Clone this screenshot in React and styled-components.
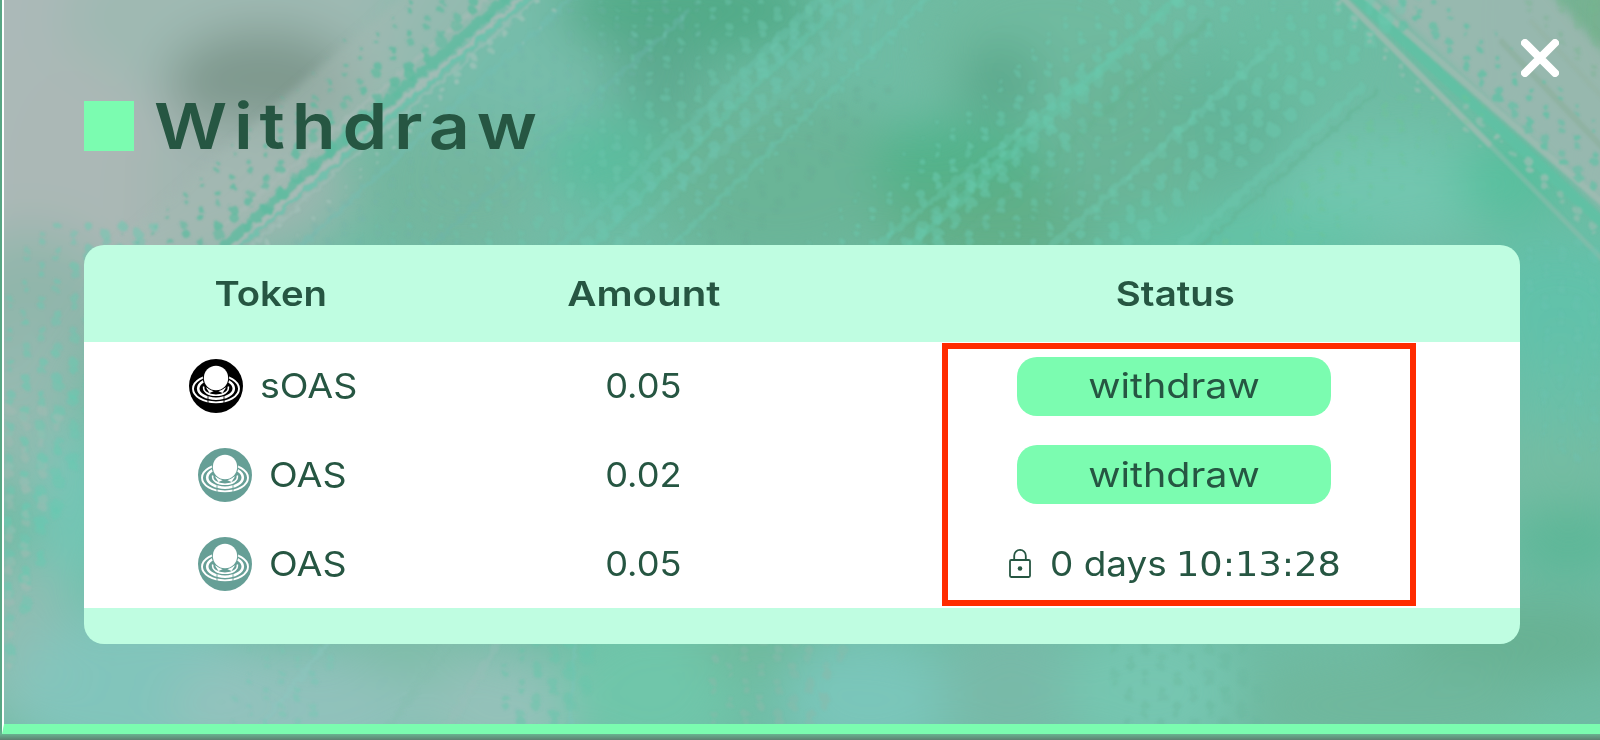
import React from "react";
import styled, { createGlobalStyle } from "styled-components";

const Global = createGlobalStyle`
  * { box-sizing: border-box; }
  body { margin: 0; overflow: hidden; font-family: Inter, "Open Sans", sans-serif; color: #265642; }
`;

const Frame = styled.div`
  width: 1600px;
  height: 740px;
  padding: 0 0 6px 2px;
  background: linear-gradient(#58a684 0 728px, #69b390 734px, #5d8172 740px);
`;

const Modal = styled.main`
  position: relative;
  height: 734px;
  border-left: 2px solid #fff;
  border-bottom: 10px solid #7bfcb0;
  background: #70bca4;
  overflow: hidden;
`;

const Backdrop = styled.svg`
  position: absolute;
  inset: 0 auto auto -4px;
`;

const Content = styled.div`
  position: relative;
  padding: 90px 80px 0;
`;

const CloseButton = styled.button`
  position: absolute;
  top: 39px;
  right: 41px;
  width: 38px;
  height: 38px;
  padding: 0;
  border: 0;
  background: none;
  svg { display: block; }
`;

const Title = styled.h1`
  display: flex;
  align-items: center;
  gap: 20px;
  height: 72px;
  margin: 0 0 83px;
  font-size: 63.5px;
  line-height: 72px;
  font-weight: 600;
  letter-spacing: 6px;
  &::before { content: ""; width: 50px; height: 50px; background: #7bfcb0; }
`;

const Table = styled.section`
  width: 1436px;
  height: 399px;
  border-radius: 20px;
  background: #bffde1;
  overflow: hidden;
`;

const Row = styled.div`
  display: grid;
  grid-template-columns: 373px 373px 690px;
  align-items: center;
  justify-items: center;
  height: 88.67px;
  font-size: 34.5px;
  line-height: 44px;
`;

const HeadRow = styled(Row)`
  height: 97px;
  font-weight: 600;
`;

const Body = styled.div`
  position: relative;
  height: 266px;
  background: #fff;
`;

const Highlight = styled.div`
  position: absolute;
  left: 858px;
  top: 1px;
  width: 474px;
  height: 263px;
  border: 6px solid #ff2b00;
  pointer-events: none;
`;

const Label = styled.span`
  display: inline-block;
  transform: scaleX(${(p) => p.$stretch || 1});
  transform-origin: ${(p) => p.$origin || "center"};
`;

const Token = styled.div`
  display: flex;
  align-items: center;
  gap: 17px;
  padding-right: 2px;
`;

const WithdrawButton = styled.button`
  width: 314px;
  height: 59px;
  margin-right: 2px;
  border: 0;
  border-radius: 20px;
  background: #7bfcb0;
  color: inherit;
  font: inherit;
  padding: 0;
`;

const Locked = styled.div`
  display: flex;
  align-items: center;
  gap: 19px;
  padding-right: 12px;
`;

const Clock = styled(Label)`
  margin-left: -2px;
  font-family: "DejaVu Sans", sans-serif;
  font-size: 34px;
`;

function CoinIcon({ color }) {
  return (
    <svg width="54" height="54" viewBox="0 0 54 54">
      <circle cx="27" cy="27" r="27" fill={color} />
      <g fill="none" stroke="#fff">
        <ellipse cx="27" cy="29.8" rx="23" ry="13.6" strokeWidth="1.9" />
        <ellipse cx="27" cy="29.5" rx="17.8" ry="10.2" strokeWidth="2.6" />
        <path d="M14.7 27.5c-1 5 4.500 8.700 12.300 8.700s13.300-3.700 12.300-8.700" strokeWidth="1.6" />
        <path d="M19 36v8M35 36v8" stroke={color} strokeWidth=".8" />
      </g>
      <path d="M17 28.500 20.500 34l4-1.800-3.500-3.700zM37 28.500 33.500 34l-4-1.800 3.500-3.700z" fill="#fff" />
      <circle cx="27" cy="19" r="13.200" fill={color} />
      <circle cx="27" cy="19" r="12.200" fill="#fff" />
    </svg>
  );
}

function LockIcon() {
  return (
    <svg width="22" height="29" viewBox="0 0 22 29" fill="none" stroke="#265642" strokeWidth="1.8">
      <rect x="1" y="11" width="20" height="17" rx="1.2" />
      <path d="M5.2 11V6.7a5.800 5.800 0 0 1 11.600 0V11" />
      <circle cx="11" cy="19.5" r="2.3" fill="#265642" stroke="none" />
    </svg>
  );
}

const blobs = [
  [40, 80, 250, 230, "#acb9b8"], [260, 20, 200, 90, "#9db9b1"],
  [262, 85, 95, 55, "#7a9588"], [230, 190, 120, 70, "#a0b6b0"],
  [70, 180, 80, 130, "#abb8b6"],
  [500, 90, 120, 160, "#78bcab"], [450, 190, 90, 70, "#74b59d"],
  [690, 10, 130, 50, "#50a985"], [620, 160, 80, 45, "#59bd9d"],
  [660, 80, 50, 45, "#5da88f"], [780, 180, 130, 90, "#69b496"],
  [1050, 45, 130, 90, "#70b99e"], [1000, 80, 40, 35, "#55a588"],
  [960, 165, 90, 45, "#4eb188"], [1000, 225, 120, 50, "#5fae86"],
  [1130, 160, 80, 100, "#69b496"], [1240, 110, 60, 80, "#62b498"],
  [1290, 50, 70, 50, "#6abca1"], [1390, 190, 120, 55, "#72c6b0"],
  [1510, 180, 55, 45, "#55bf9c"], [1240, 240, 140, 30, "#60c4a6"],
  [1600, 20, 60, 110, "#78b08f"],
  [1560, 310, 90, 75, "#61c2ab"], [1560, 400, 60, 50, "#69c0a9"],
  [1560, 470, 75, 40, "#75bca2"], [1570, 540, 60, 35, "#5ab695"],
  [1520, 640, 120, 40, "#66b091"],
  [30, 310, 90, 80, "#8eb6aa"], [35, 420, 50, 90, "#96b9b0"],
  [75, 510, 35, 90, "#73c8b8"], [20, 640, 50, 90, "#94bcb4"],
  [140, 690, 130, 85, "#84c5be"], [300, 710, 130, 65, "#93c2be"],
  [410, 640, 65, 40, "#80bda8"], [500, 710, 80, 60, "#98c2bb"],
  [650, 690, 90, 80, "#70c6ab"], [760, 640, 65, 40, "#70b99c"],
  [870, 700, 90, 65, "#7bc6bd"], [1010, 690, 70, 75, "#79b9a9"],
  [1150, 690, 90, 70, "#77c6b1"], [1390, 705, 150, 50, "#70b79c"],
];

function makeRandom(seed) {
  let s = seed;
  return () => {
    s = (s * 1664525 + 1013904223) % 4294967296;
    return s / 4294967296;
  };
}

// Halftone bands follow the line x = x0 + slope * (y - top); the dot radius
// runs from r0 at distance a to r1 at distance b.
const bands = [
  { x0: 512, slope: -1.157, top: 0, bottom: 250, a: -120, b: 0, r0: 0.8, r1: 6, fill: "#5cbb9f", o: 0.8 },
  { x0: 538, slope: -1.157, top: 0, bottom: 250, a: 0, b: 34, r0: 3.4, r1: 1.2, fill: "#a6c4bc", o: 0.75 },
  { x0: 570, slope: -1.157, top: 0, bottom: 250, a: 0, b: 170, r0: 3, r1: 3, fill: "#72b2ac", o: 0.3 },
  { x0: 600, slope: -1.1, top: 0, bottom: 250, a: 0, b: 230, r0: 1, r1: 4.6, fill: "#6cc6ac", o: 0.5 },
  { x0: 830, slope: -1.1, top: 0, bottom: 250, a: 0, b: 140, r0: 6.3, r1: 1.5, fill: "#6dc6b1", o: 0.55 },
  { x0: 880, slope: -0.9, top: 80, bottom: 250, a: -80, b: 20, r0: 2, r1: 4, fill: "#68aa94", o: 0.35 },
  { x0: 1070, slope: -1.1, top: 0, bottom: 250, a: 0, b: 110, r0: 1.5, r1: 5.5, fill: "#6acbb1", o: 0.55 },
  { x0: 1180, slope: -1.1, top: 0, bottom: 250, a: 0, b: 80, r0: 6, r1: 3, fill: "#6acbb1", o: 0.5 },
  { x0: 1260, slope: -1.1, top: 0, bottom: 250, a: 0, b: 160, r0: 2, r1: 6.5, fill: "#6bc9af", o: 0.55 },
  { x0: 1420, slope: -1.1, top: 100, bottom: 250, a: -40, b: 80, r0: 4, r1: 1.5, fill: "#6cc595", o: 0.5 },
  { x0: 1343, slope: 1.13, top: 0, bottom: 250, a: -28, b: 4, r0: 2, r1: 4, fill: "#9dbeb3", o: 0.8 },
  { x0: 1368, slope: 1.17, top: 0, bottom: 220, a: 0, b: 90, r0: 4.8, r1: 1.5, fill: "#62c0a5", o: 0.85 },
  { x0: 1520, slope: 0.9, top: 0, bottom: 140, a: 0, b: 90, r0: 3, r1: 5, fill: "#76b58f", o: 0.4 },
  { x0: 70, slope: -0.35, top: 230, bottom: 740, a: -40, b: 90, r0: 2.4, r1: 6, fill: "#64cbb1", o: 0.5 },
  { x0: 60, slope: -0.2, top: 430, bottom: 740, a: -60, b: 0, r0: 5, r1: 4, fill: "#a7bbb4", o: 0.5 },
  { x0: 540, slope: -0.2, top: 640, bottom: 740, a: -30, b: 60, r0: 3, r1: 6.5, fill: "#68c5ab", o: 0.6 },
  { x0: 270, slope: -0.3, top: 640, bottom: 740, a: -20, b: 70, r0: 2, r1: 4, fill: "#74c8b4", o: 0.5 },
  { x0: 760, slope: -0.3, top: 640, bottom: 740, a: -40, b: 90, r0: 3, r1: 5, fill: "#8bb9aa", o: 0.5 },
  { x0: 1100, slope: 0.2, top: 640, bottom: 740, a: 0, b: 150, r0: 4, r1: 4.5, fill: "#6bb99f", o: 0.45 },
  { x0: 1525, slope: 0.1, top: 250, bottom: 450, a: 0, b: 90, r0: 3, r1: 4, fill: "#6dc4b4", o: 0.35 },
];

function dotsOf(band, index) {
  const rnd = makeRandom(index * 97 + 13);
  const list = [];
  for (let row = Math.floor(band.top / 16); row * 16 < band.bottom; row++) {
    const y = row * 16 + 2;
    for (let x = (row % 2) * 16 - 8; x < 1610; x += 32) {
      for (const half of [0, 1]) {
        const px = x + half * 16 + rnd() * 3;
        const py = y + half * 8 * (index % 2 ? 1 : -1);
        const d = px - (band.x0 + band.slope * (py - band.top));
        if (d < band.a || d > band.b) continue;
        const k = (d - band.a) / (band.b - band.a);
        const r = (band.r0 + (band.r1 - band.r0) * k) * (0.75 + rnd() * 0.4);
        list.push({ cx: px, cy: py, rx: r * 1.05, ry: r, fill: band.fill, opacity: band.o * (0.7 + rnd() * 0.3) });
      }
    }
  }
  return list;
}

const dots = bands.flatMap(dotsOf);

const streaks = [
  [510, -5, 222, 247, "#5cbb9f", 9, 0.75], [525, -5, 232, 247, "#a9bdb8", 4, 0.85],
  [532, -5, 240, 247, "#6bc4ae", 4, 0.8], [541, -5, 250, 247, "#a4c0ba", 3, 0.6],
  [490, -5, 225, 225, "#a9bbb7", 4, 0.5],
  [575, -5, 300, 247, "#71bdb5", 5, 0.4], [690, 10, 430, 247, "#6cb6ac", 5, 0.4],
  [825, -5, 560, 247, "#6cc5b0", 8, 0.4], [850, -5, 590, 247, "#69c9b0", 6, 0.4],
  [890, -5, 615, 247, "#70c3ac", 9, 0.35], [930, -5, 670, 247, "#6cc9b1", 5, 0.4],
  [1120, 50, 875, 247, "#67c9ad", 6, 0.4], [1180, -5, 910, 247, "#65ccb0", 8, 0.4],
  [1210, 20, 950, 247, "#65b18e", 5, 0.4], [1280, 40, 1050, 247, "#70cfb6", 6, 0.35],
  [1365, 85, 1180, 247, "#6cc8ae", 8, 0.5], [1378, 90, 1200, 247, "#62b394", 4, 0.5],
  [1340, -5, 1490, 145, "#a1bcb2", 6, 0.8], [1490, 145, 1605, 262, "#94bcae", 5, 0.5],
  [1354, -5, 1605, 225, "#5ec2a5", 10, 0.75], [1364, -5, 1605, 205, "#a4bcb4", 6, 0.7],
  [1500, 40, 1605, 150, "#8aae98", 6, 0.5], [1530, 20, 1605, 100, "#93b4a4", 5, 0.5],
  [380, 740, 450, 640, "#84bfae", 6, 0.4], [440, 740, 500, 640, "#99bfb8", 8, 0.4],
  [575, 640, 570, 740, "#7ac5bc", 3, 0.5], [250, 740, 330, 640, "#8ac7c1", 5, 0.4],
];

function BackdropArt() {
  return (
    <Backdrop width="1600" height="740" viewBox="0 0 1600 740">
      <defs>
        <filter id="soft" x="-50%" y="-50%" width="200%" height="200%"><feGaussianBlur stdDeviation="25" /></filter>
        <filter id="edge" x="-20%" y="-20%" width="140%" height="140%"><feGaussianBlur stdDeviation="5" /></filter>
        <filter id="grain" filterUnits="userSpaceOnUse" x="-10" y="-10" width="1620" height="760">
          <feTurbulence type="fractalNoise" baseFrequency=".12" numOctaves="2" seed="4" result="noise" />
          <feDisplacementMap in="SourceGraphic" in2="noise" scale="7" />
          <feGaussianBlur stdDeviation="1.1" />
        </filter>
      </defs>
      <rect width="1600" height="740" fill="#6fbca4" />
      <g filter="url(#soft)">
        <path d="M-60-60H560L190 260-20 420-60 600Z" fill="#a6b9b4" />
        {blobs.map(([cx, cy, rx, ry, fill], i) => (
          <ellipse key={i} cx={cx} cy={cy} rx={rx} ry={ry} fill={fill} opacity=".9" />
        ))}
      </g>
      <g filter="url(#edge)">
        <path d="M420-20H528L225 250H110Z" fill="#a4b9b3" opacity=".6" />
        <path d="M1358-20H1540L1620 70V225Z" fill="#9bb8b0" opacity=".9" />
      </g>
      <g filter="url(#grain)">
        {streaks.map(([x1, y1, x2, y2, stroke, w, o], i) => (
          <line key={i} x1={x1} y1={y1} x2={x2} y2={y2} stroke={stroke} strokeWidth={w} opacity={o} />
        ))}
        {dots.map((d, i) => <ellipse key={i} {...d} />)}
      </g>
    </Backdrop>
  );
}

const rows = [
  { token: "sOAS", coin: "#000", amount: "0.05" },
  { token: "OAS", coin: "#669f96", amount: "0.02" },
  { token: "OAS", coin: "#669f96", amount: "0.05", days: "0 days", time: "10:13:28" },
];

export default function App() {
  return (
    <>
      <Global />
      <Frame>
        <Modal>
          <BackdropArt />
          <CloseButton aria-label="Close">
            <svg width="38" height="38" viewBox="0 0 38 38" stroke="#fff" strokeWidth="8" strokeLinecap="round">
              <path d="M4 4 34 34M34 4 4 34" />
            </svg>
          </CloseButton>
          <Content>
            <Title><Label $stretch={1.13} $origin="left">Withdraw</Label></Title>
            <Table>
              <HeadRow>
                <Label $stretch={1.11}>Token</Label>
                <Label $stretch={1.165}>Amount</Label>
                <Label $stretch={1.115}>Status</Label>
              </HeadRow>
              <Body>
                {rows.map((row, i) => (
                  <Row key={i}>
                    <Token>
                      <CoinIcon color={row.coin} />
                      <Label $stretch={1.09} $origin="left">{row.token}</Label>
                    </Token>
                    <Label $stretch={1.05}>{row.amount}</Label>
                    {row.time ? (
                      <Locked>
                        <LockIcon />
                        <Label $stretch={1.07} $origin="left">{row.days}</Label>
                        <Clock $stretch={1.08} $origin="left">{row.time}</Clock>
                      </Locked>
                    ) : (
                      <WithdrawButton><Label $stretch={1.145}>withdraw</Label></WithdrawButton>
                    )}
                  </Row>
                ))}
                <Highlight />
              </Body>
            </Table>
          </Content>
        </Modal>
      </Frame>
    </>
  );
}
